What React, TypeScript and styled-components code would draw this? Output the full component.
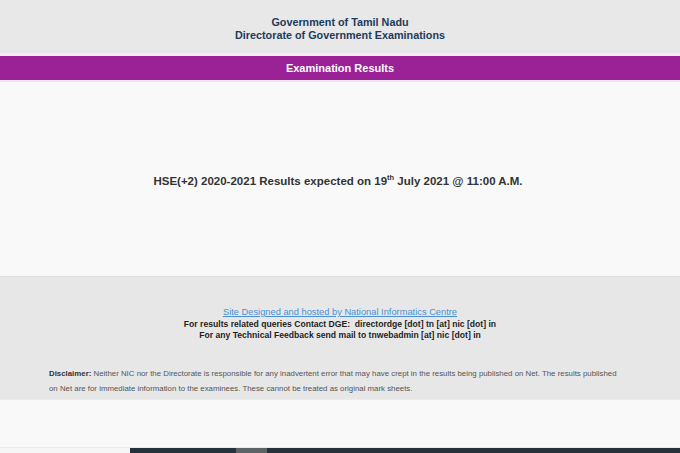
import React from "react";
import styled, { createGlobalStyle } from "styled-components";

const GlobalStyle = createGlobalStyle`
  html, body {
    margin: 0;
    padding: 0;
    background: #f9f9f9;
  }
  body {
    font-family: "Liberation Sans", Arial, sans-serif;
  }
`;

const Page = styled.div`
  width: 680px;
  height: 453px;
  display: flex;
  flex-direction: column;
  overflow: hidden;
`;

const Header = styled.header`
  height: 53px;
  background: #e8e8e8;
  display: flex;
  flex-direction: column;
  align-items: center;
  justify-content: center;
  padding-top: 4px;
  box-sizing: border-box;
  color: #1d3b5c;
  font-size: 10.8px;
  font-weight: bold;
  line-height: 13px;
`;

const Band = styled.div`
  height: 24px;
  background: #9b2196;
  border-top: 3px solid #f7eaf5;
  border-bottom: 2px solid #f4e4f2;
  display: flex;
  align-items: center;
  justify-content: center;
  color: #fff;
  font-size: 11px;
  font-weight: bold;
`;

const Main = styled.main`
  height: 194px;
  background: #f9f9f9;
  display: flex;
  align-items: center;
  justify-content: center;
  padding: 4px 4px 0 0;
  box-sizing: border-box;
`;

const Notice = styled.p`
  margin: 0;
  color: #333;
  font-size: 11.5px;
  font-weight: bold;
  sup {
    font-size: 7.5px;
    line-height: 0;
  }
`;

const Footer = styled.footer`
  height: 124px;
  background: #e7e7e7;
  border-top: 1px solid #e0e0e0;
  border-bottom: 1px solid #ececec;
  box-sizing: border-box;
  display: flex;
  flex-direction: column;
  align-items: center;
  padding-top: 30px;
`;

const Credits = styled.div`
  display: flex;
  flex-direction: column;
  align-items: center;
  font-size: 8.6px;
  line-height: 11.5px;
  color: #1e1e1e;
  font-weight: bold;
`;

const SiteLink = styled.a`
  color: #4b8fd1;
  font-size: 9.3px;
  font-weight: normal;
  text-decoration: underline;
`;

const Disclaimer = styled.p`
  margin: 24px 0 0 49px;
  width: 578px;
  align-self: flex-start;
  font-size: 7.85px;
  line-height: 15px;
  color: #555;
  b {
    color: #333;
  }
`;

const Spacer = styled.div`
  height: 47px;
  background: #f9f9f9;
  border-bottom: 1px solid #e9e9e9;
`;

const Strip = styled.div`
  flex: 1;
  display: flex;
`;

const StripPart = styled.div<{ $w?: number; $tone: string }>`
  ${(p) => (p.$w ? `width: ${p.$w}px;` : "flex: 1;")}
  background: ${(p) => p.$tone};
`;

export default function App() {
  return (
    <>
      <GlobalStyle />
      <Page>
        <Header>
          <div>Government of Tamil Nadu</div>
          <div>Directorate of Government Examinations</div>
        </Header>
        <Band>Examination Results</Band>
        <Main>
          <Notice>
            HSE(+2) 2020-2021 Results expected on 19<sup>th</sup> July 2021 @ 11:00 A.M.
          </Notice>
        </Main>
        <Footer>
          <Credits>
            <SiteLink href="#">Site Designed and hosted by National Informatics Centre</SiteLink>
            <span>For results related queries Contact DGE:&nbsp; directordge [dot] tn [at] nic [dot] in</span>
            <span>For any Technical Feedback send mail to tnwebadmin [at] nic [dot] in</span>
          </Credits>
          <Disclaimer>
            <b>Disclaimer:</b> Neither NIC nor the Directorate is responsible for any inadvertent error that may have crept in the results being published on Net. The results published on Net are for immediate information to the examinees. These cannot be treated as original mark sheets.
          </Disclaimer>
        </Footer>
        <Spacer />
        <Strip>
          <StripPart $w={130} $tone="#f6f6f6" />
          <StripPart $w={106} $tone="#26323b" />
          <StripPart $w={31} $tone="#5d6468" />
          <StripPart $tone="#26313a" />
        </Strip>
      </Page>
    </>
  );
}
